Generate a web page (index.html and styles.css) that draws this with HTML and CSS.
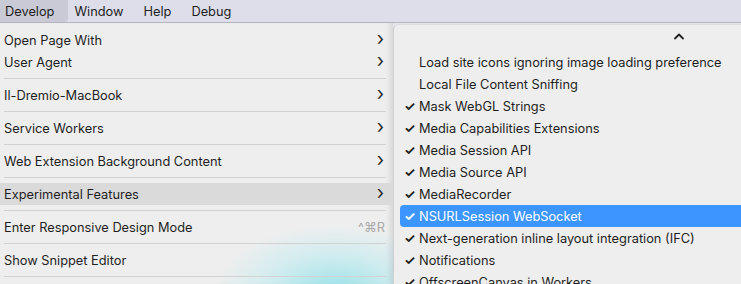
FILE: index.html
```html
<!DOCTYPE html>
<html lang="en">
<head>
  <meta charset="UTF-8" />
  <title>Develop menu</title>
  <link rel="stylesheet" href="styles.css">
</head>
<body>
  <div class="menubar">
    <span class="bar-item active">Develop</span>
    <span class="bar-item">Window</span>
    <span class="bar-item">Help</span>
    <span class="bar-item">Debug</span>
  </div>

  <div class="stage">
    <div class="menu">
      <div class="item"><span>Open Page With</span><span class="chev">&#x203A;</span></div>
      <div class="item"><span>User Agent</span><span class="chev">&#x203A;</span></div>
      <div class="sep"></div>
      <div class="item"><span>Il-Dremio-MacBook</span><span class="chev">&#x203A;</span></div>
      <div class="sep"></div>
      <div class="item"><span>Service Workers</span><span class="chev">&#x203A;</span></div>
      <div class="sep"></div>
      <div class="item"><span>Web Extension Background Content</span><span class="chev">&#x203A;</span></div>
      <div class="sep"></div>
      <div class="item open"><span>Experimental Features</span><span class="chev">&#x203A;</span></div>
      <div class="sep"></div>
      <div class="item"><span>Enter Responsive Design Mode</span><span class="key">^&#x2318;R</span></div>
      <div class="sep"></div>
      <div class="item"><span>Show Snippet Editor</span></div>
      <div class="sep"></div>
    </div>

    <div class="submenu">
      <div class="scroll-up">
        <svg width="12" height="8" viewBox="0 0 12 8"><path d="M2 6.5 L6 2.5 L10 6.5" fill="none" stroke="#222" stroke-width="1.8" stroke-linecap="round" stroke-linejoin="round"/></svg>
      </div>
      <div class="opt"><span class="check"></span>Load site icons ignoring image loading preference</div>
      <div class="opt"><span class="check"></span>Local File Content Sniffing</div>
      <div class="opt"><span class="check">&#x2713;</span>Mask WebGL Strings</div>
      <div class="opt"><span class="check">&#x2713;</span>Media Capabilities Extensions</div>
      <div class="opt"><span class="check">&#x2713;</span>Media Session API</div>
      <div class="opt"><span class="check">&#x2713;</span>Media Source API</div>
      <div class="opt"><span class="check">&#x2713;</span>MediaRecorder</div>
      <div class="opt selected"><span class="check">&#x2713;</span>NSURLSession WebSocket</div>
      <div class="opt"><span class="check">&#x2713;</span>Next-generation inline layout integration (IFC)</div>
      <div class="opt"><span class="check">&#x2713;</span>Notifications</div>
      <div class="opt"><span class="check">&#x2713;</span>OffscreenCanvas in Workers</div>
    </div>
  </div>
</body>
</html>
```

FILE: styles.css
```css
* {
  box-sizing: border-box;
}

body {
  margin: 0;
  width: 741px;
  height: 284px;
  overflow: hidden;
  font-family: "Inter", "Liberation Sans", sans-serif;
  font-size: 12.8px;
  color: #1e1e1e;
  background: #e4e4ea;
}

.menubar {
  height: 23px;
  display: flex;
  align-items: stretch;
  background: #dddeea;
  border-bottom: 1px solid #b4b5bf;
}

.bar-item {
  display: flex;
  align-items: center;
}

.bar-item + .bar-item {
  margin-left: 20px;
}

.bar-item.active {
  padding: 0 14px 0 5px;
  background: #c9cad6;
  border-radius: 0 0 4px 0;
}

.bar-item.active + .bar-item {
  margin-left: 6px;
}

.stage {
  display: flex;
  height: 261px;
}

.menu {
  width: 393px;
  padding-top: 6px;
  background:
    radial-gradient(ellipse 120px 66px at 335px 268px, rgba(150, 226, 232, 0.95), rgba(185, 235, 240, 0.55) 55%, rgba(238, 238, 238, 0) 100%),
    #eeeeee;
  box-shadow: inset -6px 0 6px -4px rgba(0, 0, 0, 0.12);
}

.item {
  height: 22px;
  display: flex;
  align-items: center;
  justify-content: space-between;
  padding: 0 9px 0 4px;
}

.item.open {
  background: #dadada;
}

.chev {
  font-size: 19px;
  line-height: 1;
  margin-top: -3px;
  color: #2a2a2a;
}

.key {
  color: #a9a9a9;
  font-size: 12.8px;
  margin-right: -1px;
}

.sep {
  height: 11px;
  display: flex;
  align-items: center;
  padding: 0 7px 0 4px;
}

.sep::after {
  content: "";
  flex: 1;
  height: 1px;
  background: #d2d2d2;
}

.submenu {
  flex: 1;
  margin-top: 1px;
  padding: 0 0 0 6px;
  background: #eeeeee;
  border-left: 1px solid #cfcfcf;
  border-top: 1px solid #dedede;
  border-radius: 6px 0 0 0;
}

.scroll-up {
  height: 26px;
  display: flex;
  align-items: center;
  justify-content: flex-end;
  padding-right: 56px;
  padding-bottom: 4px;
}

.opt {
  height: 22px;
  display: flex;
  align-items: center;
  padding-left: 4px;
  white-space: nowrap;
}

.check {
  width: 15px;
  font-size: 13px;
  font-weight: 700;
}

.opt.selected {
  background: #3d95ff;
  color: #ffffff;
  border-radius: 4px 0 0 4px;
}
```
